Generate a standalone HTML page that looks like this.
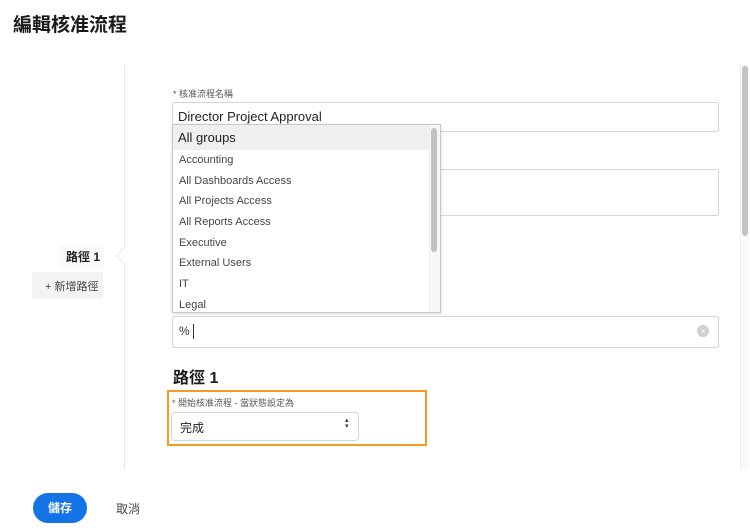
<!DOCTYPE html>
<html><head><meta charset="utf-8"><style>
*{margin:0;padding:0;box-sizing:border-box}
body{width:750px;height:532px;background:#fff;font-family:"Liberation Sans","Noto Sans CJK TC",sans-serif;color:#222;position:relative;overflow:hidden}
.a{position:absolute}
.inp{position:absolute;border:1px solid #d6d6d6;border-radius:2px;background:#fff}
.it{position:absolute;left:6px;font-size:11px;color:#444}
</style></head><body>
<div class="a" style="left:13px;top:10px;font-size:19px;font-weight:bold;color:#1a1a1a">編輯核准流程</div>
<div class="a" style="left:124px;top:65px;width:1px;height:405px;background:#e8e8e8"></div>
<div class="a" style="left:118px;top:250px;width:12px;height:12px;background:#fff;border-left:1px solid #e8e8e8;border-bottom:1px solid #e8e8e8;transform:rotate(45deg)"></div>
<div class="a" style="left:60px;top:245px;width:43px;height:24px;background:#fafafa"></div>
<div class="a" style="left:66px;top:248px;font-size:12px;font-weight:bold;color:#222">路徑 1</div>
<div class="a" style="left:32px;top:272px;width:71px;height:27px;background:#f3f3f3"></div>
<div class="a" style="left:45px;top:278px;font-size:11px;color:#444">+ 新增路徑</div>
<div class="a" style="left:740px;top:65px;width:9px;height:405px;background:#fafafa;border-left:1px solid #eee"></div>
<div class="a" style="left:742px;top:66px;width:6px;height:170px;background:#c4c4c4;border-radius:3px"></div>
<div class="a" style="left:173px;top:87px;font-size:9px;color:#555">* 核准流程名稱</div>
<div class="inp" style="left:172px;top:102px;width:547px;height:30px"></div>
<div class="a" style="left:178px;top:109px;font-size:13px;color:#222">Director Project Approval</div>
<div class="inp" style="left:172px;top:169px;width:547px;height:47px"></div>
<div class="inp" style="left:172px;top:316px;width:547px;height:32px"></div>
<div class="a" style="left:179px;top:324px;font-size:12px;color:#333">%</div>
<div class="a" style="left:193px;top:324px;width:1px;height:15px;background:#333"></div>
<div class="a" style="left:697px;top:325px;width:12px;height:12px;border-radius:50%;background:#d0d0d0;color:#fff;font-size:9px;line-height:12px;text-align:center">×</div>
<div class="a" style="left:172px;top:124px;width:269px;height:189px;border:1px solid #c8c8c8;background:#fff;box-shadow:0 1px 3px rgba(0,0,0,.15);overflow:hidden">
<div class="a" style="left:0;top:0;width:256px;height:25px;background:#efefef"></div>
<div class="a" style="left:5px;top:5px;font-size:13px;color:#222">All groups</div>
<div class="it" style="top:29px">Accounting</div>
<div class="it" style="top:50px">All Dashboards Access</div>
<div class="it" style="top:70px">All Projects Access</div>
<div class="it" style="top:91px">All Reports Access</div>
<div class="it" style="top:112px">Executive</div>
<div class="it" style="top:132px">External Users</div>
<div class="it" style="top:153px">IT</div>
<div class="it" style="top:174px">Legal</div>
<div class="a" style="left:256px;top:0;width:12px;height:189px;background:#f7f7f7;border-left:1px solid #eee"></div>
<div class="a" style="left:258px;top:3px;width:6px;height:124px;background:#c2c2c2;border-radius:3px"></div>
</div>
<div class="a" style="left:173px;top:364px;font-size:16px;font-weight:bold;color:#1a1a1a">路徑 1</div>
<div class="a" style="left:167px;top:390px;width:260px;height:56px;border:2px solid #f59a23"></div>
<div class="a" style="left:172px;top:396px;font-size:9px;color:#555">* 開始核准流程 - 當狀態設定為</div>
<div class="inp" style="left:171px;top:412px;width:188px;height:29px;border-radius:4px"></div>
<div class="a" style="left:180px;top:419px;font-size:12px;color:#222">完成</div>
<div class="a" style="left:345px;top:418px;font-size:7px;line-height:6px;color:#333">▴<br>▾</div>
<div class="a" style="left:33px;top:493px;width:54px;height:30px;border-radius:15px;background:#1473e6;color:#fff;font-size:12px;font-weight:bold;text-align:center;line-height:30px">儲存</div>
<div class="a" style="left:116px;top:500px;font-size:12px;color:#444">取消</div>
</body></html>
